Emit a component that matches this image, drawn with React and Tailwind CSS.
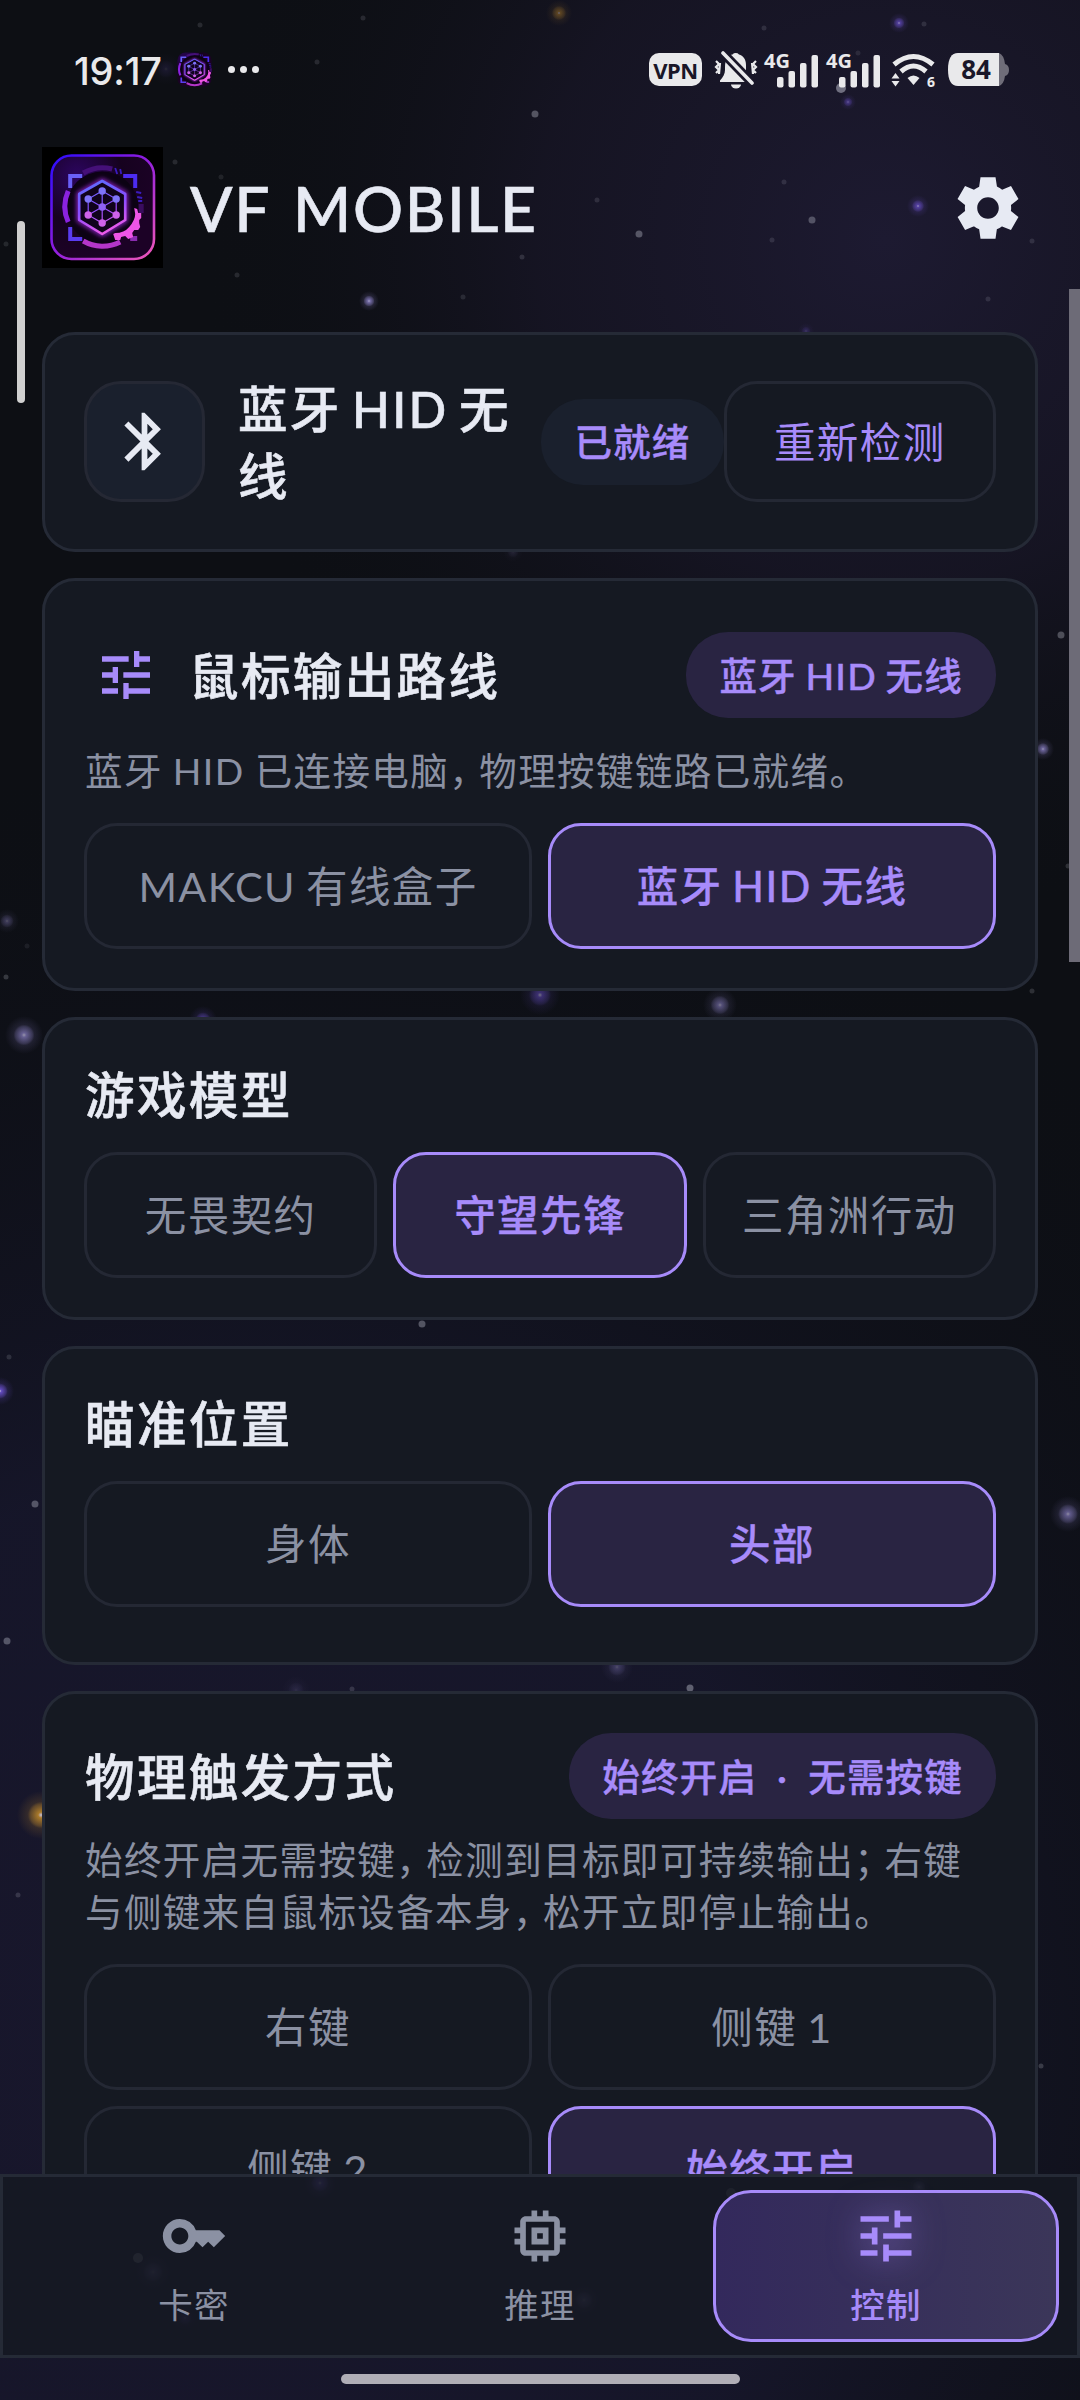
import { MdBluetooth, MdKey, MdMemory, MdTune } from 'react-icons/md'

const WHITE = '#d8dae6'
const VIOLET = '#7c5cf0'
const LILAC = '#a99cf0'
const AMBER = '#d99a2b'

// [x, y, radius, opacity]
const dots = [
  [200, 25, 2.5, 0.13], [363, 18, 2.5, 0.13], [317, 62, 2.5, 0.13], [535, 114, 3.5, 0.33],
  [175, 162, 2.5, 0.13], [221, 177, 2.5, 0.1], [6, 244, 2.5, 0.12], [237, 275, 2.5, 0.13],
  [463, 297, 2.5, 0.12], [522, 257, 2.5, 0.15], [764, 28, 2.5, 0.13], [924, 24, 2.5, 0.13],
  [858, 53, 2.5, 0.1], [841, 88, 5, 0.45], [597, 200, 2.5, 0.13], [639, 234, 3.5, 0.33],
  [812, 220, 3.5, 0.3], [784, 182, 2.5, 0.13], [772, 240, 2.5, 0.13], [1032, 241, 2.5, 0.13],
  [988, 299, 2.5, 0.13], [1061, 635, 3.5, 0.3], [27, 946, 2.5, 0.08], [6, 977, 2.5, 0.2],
  [1032, 991, 2.5, 0.16], [1068, 866, 2.5, 0.16], [422, 1324, 3.5, 0.33], [9, 1357, 2.5, 0.14],
  [35, 1504, 3.5, 0.33], [7, 1641, 3.5, 0.33], [352, 1689, 2.5, 0.16], [690, 1688, 3.5, 0.38],
  [18, 1895, 2.5, 0.16], [1041, 2066, 2.5, 0.2], [138, 2258, 5, 0.4], [731, 2193, 5, 0.3],
]

// [x, y, radius, colour, opacity]
const glows = [
  [166, 69, 16, VIOLET, 0.15], [369, 301, 10, LILAC, 0.9], [559, 13, 13, AMBER, 0.5],
  [899, 23, 10, VIOLET, 0.8], [848, 102, 8, VIOLET, 0.6], [918, 206, 11, VIOLET, 0.8],
  [806, 331, 8, VIOLET, 0.3], [513, 552, 10, LILAC, 0.15], [1043, 749, 11, LILAC, 0.8],
  [7, 921, 12, LILAC, 0.4], [24, 1035, 19, LILAC, 0.75], [203, 1020, 14, VIOLET, 0.7],
  [540, 995, 20, VIOLET, 0.55], [720, 1005, 17, LILAC, 0.6], [0, 1391, 14, VIOLET, 1],
  [1068, 1514, 18, LILAC, 0.7], [617, 1667, 16, LILAC, 0.35], [296, 1690, 14, LILAC, 0.15],
  [41, 1815, 24, AMBER, 1], [320, 2183, 16, VIOLET, 0.8], [153, 2272, 18, LILAC, 0.4],
  [584, 2300, 16, LILAC, 0.4], [919, 2187, 12, LILAC, 0.5], [921, 2208, 10, LILAC, 0.4],
  [185, 2318, 12, VIOLET, 0.4],
]

function Starfield() {
  return (
    <svg className="absolute inset-0" width="1080" height="2400">
      <defs>
        <radialGradient id="topGlow" gradientUnits="userSpaceOnUse" cx="885" cy="240" r="690">
          <stop offset="0" stopColor="#1d1a31" />
          <stop offset="0.5" stopColor="#171525" stopOpacity="0.85" />
          <stop offset="1" stopColor="#0d0f14" stopOpacity="0" />
        </radialGradient>
        <radialGradient id="lowGlow" gradientUnits="userSpaceOnUse" cx="250" cy="2050" r="1300">
          <stop offset="0" stopColor="#19172d" />
          <stop offset="0.45" stopColor="#16162a" stopOpacity="0.95" />
          <stop offset="1" stopColor="#0d0f16" stopOpacity="0" />
        </radialGradient>
        {[[VIOLET, 'violet'], [LILAC, 'lilac'], [AMBER, 'amber']].map(([color, id]) => (
          <radialGradient key={id} id={id}>
            <stop offset="0" stopColor="#e6e0ff" stopOpacity="0.85" />
            <stop offset="0.12" stopColor={color} stopOpacity="0.75" />
            <stop offset="0.45" stopColor={color} stopOpacity="0.35" />
            <stop offset="0.55" stopColor={color} stopOpacity="0.15" />
            <stop offset="1" stopColor={color} stopOpacity="0" />
          </radialGradient>
        ))}
      </defs>
      <rect width="1080" height="2400" fill="url(#topGlow)" />
      <rect width="1080" height="2400" fill="url(#lowGlow)" />
      {dots.map(([x, y, r, o]) => (
        <circle key={`${x}-${y}`} cx={x} cy={y} r={r} fill={WHITE} opacity={o} />
      ))}
      {glows.map(([x, y, r, c, o]) => (
        <circle
          key={`${x}-${y}`}
          cx={x}
          cy={y}
          r={r}
          fill={c === VIOLET ? 'url(#violet)' : c === AMBER ? 'url(#amber)' : 'url(#lilac)'}
          opacity={o}
        />
      ))}
    </svg>
  )
}

function LogoMark({ id, frame, className }) {
  const nodes = [[62, 51], [48, 59], [76, 59], [62, 67], [48, 75], [76, 75], [62, 83]]
  return (
    <svg className={className} viewBox={frame ? '0 0 121 121' : '18 16 84 88'} preserveAspectRatio="none">
      <defs>
        <linearGradient id={`${id}-edge`} x1="0" y1="0" x2="1" y2="1">
          <stop offset="0" stopColor="#2a0cff" />
          <stop offset="0.45" stopColor="#8a1be0" />
          <stop offset="1" stopColor="#f058b8" />
        </linearGradient>
        <linearGradient id={`${id}-hex`} gradientUnits="userSpaceOnUse" x1="50" y1="42" x2="66" y2="94">
          <stop offset="0" stopColor="#5f6bff" />
          <stop offset="0.5" stopColor="#8b4dff" />
          <stop offset="1" stopColor="#f25ce8" />
        </linearGradient>
        <radialGradient id={`${id}-bg`} cx="0.25" cy="0.2" r="0.8">
          <stop offset="0" stopColor="#2c0560" />
          <stop offset="0.55" stopColor="#16021f" />
          <stop offset="1" stopColor="#1c0226" />
        </radialGradient>
        <filter id={`${id}-glow`} x="-30%" y="-30%" width="160%" height="160%">
          <feGaussianBlur stdDeviation="2.6" />
        </filter>
      </defs>
      {frame && <rect width="121" height="121" fill="#000" />}
      <rect
        x={frame ? 9.5 : 19} y={frame ? 8.5 : 17} width={frame ? 102.5 : 82} height={frame ? 103.5 : 86}
        rx="20" fill={`url(#${id}-bg)`} stroke={frame ? `url(#${id}-edge)` : 'none'} strokeWidth="2.6"
      />
      <g transform="translate(-1.8 -7)">
        <circle cx="62" cy="67.5" r="36" fill="#0c0214" />
        <g fill="none" strokeWidth="5">
          <path d="M43 33 A39 39 0 0 1 72 29" stroke="#451078" />
          <path d="M28 51 A38 38 0 0 0 28 82" stroke="#8a22e0" />
          <path d="M43 101 A39 39 0 0 0 80 102" stroke="#b436c8" />
          <path d="M101 64 L101 73" stroke="#3a0c5e" />
          <path d="M75 28 l2 6 M80 29 l1 5 M96 52 l5 1 M97 57 l5 1 M98 61 l4 0" stroke="#3a1cc0" strokeWidth="1.8" />
        </g>
        <g fill="none" stroke="#5a3cf0" strokeWidth="4">
          <path d="M30 48 V36 H42" stroke="#6a60f8" />
          <path d="M83 36 H95 V48" stroke="#4c2cf0" />
          <path d="M30 87 V99 H42" />
          <path d="M90 99 H95 V96" stroke="#8a2cb0" />
        </g>
        <path d="M62 41 L85 54 V80 L62 94 L39 80 V54 Z" fill="none" stroke="#b22cf8" strokeWidth="4" filter={`url(#${id}-glow)`} />
        <path d="M62 41 L85 54 V80 L62 94 L39 80 V54 Z" fill="#10031c" stroke={`url(#${id}-hex)`} strokeWidth="2.6" strokeLinejoin="round" />
        <path d="M62 51 L76 59 V75 L62 83 L48 75 V59 Z M62 51 V83 M48 59 L76 75 M76 59 L48 75" fill="none" stroke={`url(#${id}-hex)`} strokeWidth="1.2" />
        {nodes.map(([x, y]) => (
          <circle key={`${x}${y}`} cx={x} cy={y} r="3.7" fill={y < 60 ? '#7f74fa' : y < 70 ? '#8f62f5' : '#cf62ea'} />
        ))}
        {/* gear segment hugging the lower right of the ring */}
        <path
          d="M94 68 l3 1 l1 4 l3 0 l0 5 l-2 2 v3 l1 4 l-2 3 l-4 0 l-2 3 l1 4 l-5 2 l-3 -3 l-4 1 l-1 3 l-5 0 l-1 -3 l-1 -3 l2 -1 q9 0 14 -6 q6 -7 6 -13 z"
          fill="#ee55e6"
        />
      </g>
    </svg>
  )
}

function SettingsGear() {
  return (
    <svg className="w-[74px] h-[74px]" viewBox="0 0 24 24" fill="#e7eaf3">
      <path d="M19.44 12.99l-.01.02c.04-.33.08-.67.08-1.01 0-.34-.03-.66-.07-.99l.01.02 2.44-1.92-2.43-4.22-2.87 1.16.01.01c-.52-.4-1.09-.74-1.71-1h.01L14.44 2H9.57l-.44 3.07h.01c-.62.26-1.19.6-1.71 1l.01-.01-2.88-1.17-2.44 4.22 2.44 1.92.01-.02c-.04.33-.07.65-.07.99 0 .34.03.68.08 1.01l-.01-.02-2.1 1.65-.33.26 2.43 4.2 2.88-1.15-.02-.04c.53.41 1.1.75 1.73 1.01h-.03L9.58 22h4.85s.03-.18.06-.42l.38-2.65h-.01c.62-.26 1.2-.6 1.73-1.01l-.02.04 2.88 1.15 2.43-4.2s-.14-.12-.33-.26l-2.11-1.66zM12 15.5c-1.93 0-3.5-1.57-3.5-3.5s1.57-3.5 3.5-3.5 3.5 1.57 3.5 3.5-1.57 3.5-3.5 3.5z" />
    </svg>
  )
}

function BellOff() {
  return (
    <svg className="w-[44px] h-[38px]" viewBox="0 0 44 38" fill="#e9e9eb">
      <path d="M11 16 C11 8 15 4 18.500 3.500 A4 3.500 0 0 1 25 3.500 C29 4.500 32 8 32 14 V20 C32 23 34 25 37 29 V31 H6 V29.500 C9 26 11 23 11 19 Z" />
      <path d="M17 33.500 H27 A5 4 0 0 1 17 33.500 Z" />
      <path d="M8 1 L39 33" stroke="#191628" strokeWidth="9" />
      <path d="M9 2 L38 32" stroke="#e9e9eb" strokeWidth="3.600" strokeLinecap="round" />
      <path d="M2 10 l3 3 l-3 3 l3 3 l-3 3 M6 12 l-1 11 M42 10 l-3 3 l3 3 l-3 3 l3 3 M38 12 l1 11" fill="none" stroke="#e9e9eb" strokeWidth="2.200" />
    </svg>
  )
}

function Signal() {
  return (
    <div className="relative w-[55px] h-[36px]">
      <span className="absolute left-0 -top-[3px] text-[20px] leading-[24px] font-bold font-['Noto_Sans']">4G</span>
      <svg className="absolute left-[13px] top-[3px]" width="42" height="33" fill="#e9e9eb">
        <rect x="0" y="22" width="6.500" height="10.500" rx="2" />
        <rect x="11.500" y="16" width="6.500" height="16.500" rx="2" />
        <rect x="23" y="8" width="6.500" height="24.500" rx="2" />
        <rect x="34.500" y="0" width="6.500" height="32.500" rx="2" />
      </svg>
    </div>
  )
}

function Wifi() {
  return (
    <svg className="w-[46px] h-[36px] overflow-visible" viewBox="0 0 46 36" fill="none" stroke="#e9e9eb">
      <path d="M3 12.500 Q22.500 -3.500 42 12.500" strokeWidth="5" />
      <path d="M10 19.500 Q22.500 8.500 35 19.500" strokeWidth="5" />
      <path d="M16.500 26 Q22.500 21 28.500 26 L22.500 33 Z" fill="#e9e9eb" stroke="none" />
      <path d="M0.500 26.500 L4.500 21 L8.500 26.500 Z M0.500 29 L4.500 34.500 L8.500 29 Z" fill="#e9e9eb" stroke="none" />
      <text x="36" y="34.500" fontSize="14" fontWeight="700" fontFamily="Noto Sans" fill="#e9e9eb" stroke="none">6</text>
    </svg>
  )
}

function Battery() {
  return (
    <svg className="w-[62px] h-[34px] overflow-visible" viewBox="0 0 62 34">
      <path d="M50 0 H51 Q56 2 57 11 Q61 12 61 17 Q61 22 57 23 Q56 31 51 33 H50 Z" fill="#6f6d79" />
      <path d="M10 0 H51 V33 H10 Q0 33 0 16.500 Q0 0 10 0 Z" fill="#e9e9eb" />
      <text x="28" y="26" textAnchor="middle" fontSize="26" fontWeight="700" fontFamily="Noto Sans" fill="#1a1729">84</text>
    </svg>
  )
}

function StatusBar() {
  return (
    <div className="flex items-center justify-between h-[141px] pl-[74px] pr-[70px] pb-[2px] text-[#e9e9eb]">
      <div className="flex items-center">
        <span className="w-[103px] pt-[2px] text-[38px] leading-[46px] font-medium tracking-[-0.2px] whitespace-nowrap font-['Inter']">19:17</span>
        <LogoMark id="mini" className="w-[35px] h-[35px]" />
        <span className="flex gap-[5.5px] ml-[16px]">
          <i className="w-[6.5px] h-[6.5px] rounded-full bg-[#e9e9eb]" />
          <i className="w-[6.5px] h-[6.5px] rounded-full bg-[#e9e9eb]" />
          <i className="w-[6.5px] h-[6.5px] rounded-full bg-[#e9e9eb]" />
        </span>
      </div>
      <div className="flex items-center">
        <span className="flex items-center justify-center w-[53px] h-[33px] rounded-[10px] bg-[#e9e9eb] text-[#191628] text-[22px] leading-[30px] font-bold tracking-[-0.5px] font-['Noto_Sans']">
          VPN
        </span>
        <span className="ml-[12px]"><BellOff /></span>
        <span className="ml-[6px]"><Signal /></span>
        <span className="ml-[7px]"><Signal /></span>
        <span className="ml-[10px]"><Wifi /></span>
        <span className="ml-[11px]"><Battery /></span>
      </div>
    </div>
  )
}

function Card({ className = '', children }) {
  return (
    <section className={`shrink-0 rounded-[33px] border-3 border-[#252a36] bg-[#151922] px-[39px] ${className}`}>
      {children}
    </section>
  )
}

function Title({ children }) {
  return (
    <h2 className="text-[49.5px] leading-[65px] pt-[2px] pl-px font-medium tracking-[2.4px] [word-spacing:-4px] text-[#e7eaf3] [-webkit-text-stroke:0.6px]">
      {children}
    </h2>
  )
}

function Pill({ muted, children }) {
  return (
    <span
      className={`shrink-0 flex items-center h-[86px] px-[33px] pt-[2px] rounded-[42px] text-[37.5px] font-medium tracking-[1.2px] [word-spacing:-2px] text-[#a78bfa] [-webkit-text-stroke:0.4px] whitespace-nowrap ${
        muted ? 'bg-[#1a202d]' : 'bg-[#292442]'
      }`}
    >
      {children}
    </span>
  )
}

function Option({ active, children }) {
  return (
    <button
      className={`h-[126px] pt-[1px] rounded-[33px] border-3 text-[41.5px] tracking-[1.4px] [word-spacing:-2px] whitespace-nowrap ${
        active
          ? 'border-[#a78bfa] bg-[#292442] text-[#a78bfa] font-medium [-webkit-text-stroke:0.3px]'
          : 'border-[#242834] text-[#8b91a3]'
      }`}
    >
      {children}
    </button>
  )
}

// Full-width punctuation set tighter than its em box
function Mark({ children }) {
  return <span className="mr-[10px] [font-feature-settings:'halt']">{children}</span>
}

function Tab({ icon: Icon, label, active }) {
  return (
    <button
      className={`flex flex-col items-center h-[152px] pt-[9px] rounded-[38px] border-3 ${
        active
          ? 'border-[#a78bfa] bg-linear-to-r from-[#33295c] to-[#3b3659] text-[#a78bfa] font-medium'
          : 'border-transparent text-[#8b91a3]'
      }`}
    >
      <Icon className={`w-[68px] h-[68px] ${active ? 'drop-shadow-[0_0_16px_rgba(167,139,250,0.55)]' : ''}`} />
      <span className="mt-[13px] text-[34.5px] leading-[44px] tracking-[1.3px]">{label}</span>
    </button>
  )
}

export default function App() {
  return (
    <div className="relative flex flex-col w-[1080px] h-[2400px] overflow-hidden bg-[#0d0f14] font-['Lato','Noto_Sans_CJK_SC',sans-serif]">
      <Starfield />
      <div className="absolute left-[17px] top-[221px] w-[8px] h-[182px] rounded-full bg-[#d0d0d0]" />
      <div className="absolute left-[1069px] top-[289px] w-[11px] h-[673px] bg-[#6d6b77]" />

      <div className="relative">
        <StatusBar />
        <header className="flex items-center h-[133px] pl-[42px] pr-[55px]">
          <LogoMark id="logo" frame className="w-[121px] h-[121px]" />
          <h1 className="ml-[27px] grow text-[62.5px] leading-[70px] font-medium tracking-[1.6px] [word-spacing:6px] text-[#e7eaf3] [-webkit-text-stroke:0.6px]">
            VF MOBILE
          </h1>
          <SettingsGear />
        </header>
      </div>

      <main className="relative flex flex-col gap-[26px] h-[1900px] px-[42px] pt-[58px] overflow-hidden">
        <Card className="flex items-center h-[220px] pb-[1px]">
          <span className="shrink-0 flex items-center justify-center w-[121px] h-[121px] rounded-[37px] border-3 border-[#252834] bg-[#1a202d]">
            <MdBluetooth className="w-[69px] h-[69px] text-[#e7eaf3]" />
          </span>
          <div className="w-[305px] ml-[32px]">
            <h2 className="pt-[3px] pl-px text-[49.5px] leading-[67px] font-medium tracking-[2.2px] [word-spacing:-4px] text-[#e7eaf3] [-webkit-text-stroke:0.6px]">
              蓝牙 HID 无线
            </h2>
          </div>
          <Pill muted>已就绪</Pill>
          <button className="w-[273px] h-[121px] pt-[2px] rounded-[33px] border-3 border-[#242834] text-[41.5px] tracking-[1.4px] text-[#a78bfa]">
            重新检测
          </button>
        </Card>

        <Card className="h-[413px] pt-[51px]">
          <div className="flex items-center justify-between h-[86px]">
            <div className="flex items-center">
              <MdTune className="w-[64px] h-[64px] ml-[10px] mr-[30px] text-[#a78bfa]" />
              <Title>鼠标输出路线</Title>
            </div>
            <Pill>蓝牙 HID 无线</Pill>
          </div>
          <p className="mt-[27px] pl-px text-[37.5px] leading-[52px] tracking-[1.4px] [word-spacing:-1px] text-[#8b91a3]">
            蓝牙 HID 已连接电脑<Mark>，</Mark>物理按键链路已就绪。
          </p>
          <div className="grid grid-cols-2 gap-[16px] mt-[26px]">
            <Option>MAKCU 有线盒子</Option>
            <Option active>蓝牙 HID 无线</Option>
          </div>
        </Card>

        <Card className="h-[303px] pt-[41px]">
          <Title>游戏模型</Title>
          <div className="grid grid-cols-3 gap-[16px] mt-[24px]">
            <Option>无畏契约</Option>
            <Option active>守望先锋</Option>
            <Option>三角洲行动</Option>
          </div>
        </Card>

        <Card className="h-[319px] pt-[41px]">
          <Title>瞄准位置</Title>
          <div className="grid grid-cols-2 gap-[16px] mt-[24px]">
            <Option>身体</Option>
            <Option active>头部</Option>
          </div>
        </Card>

        <Card className="h-[600px] pt-[39px]">
          <div className="flex items-center justify-between h-[86px]">
            <Title>物理触发方式</Title>
            <Pill>
              始终开启<span className="mx-[20px]">·</span>无需按键
            </Pill>
          </div>
          <p className="mt-[15px] pl-px text-[37.5px] leading-[52px] tracking-[1.4px] text-[#8b91a3] whitespace-nowrap">
            始终开启无需按键<Mark>，</Mark>检测到目标即可持续输出<Mark>；</Mark>右键
            <br />
            与侧键来自鼠标设备本身<Mark>，</Mark>松开立即停止输出。
          </p>
          <div className="grid grid-cols-2 gap-[16px] mt-[26px]">
            <Option>右键</Option>
            <Option>侧键 1</Option>
            <Option>侧键 2</Option>
            <Option active>始终开启</Option>
          </div>
        </Card>
      </main>

      <nav className="relative grid grid-cols-3 h-[184px] px-[18px] pt-[13px] border-3 border-[#252a36] bg-[#151922]/85">
        <Tab icon={MdKey} label="卡密" />
        <Tab icon={MdMemory} label="推理" />
        <Tab icon={MdTune} label="控制" active />
      </nav>
      <div className="relative mx-auto mt-[16px] w-[399px] h-[10px] rounded-full bg-[#b0aeb6]" />
    </div>
  )
}
